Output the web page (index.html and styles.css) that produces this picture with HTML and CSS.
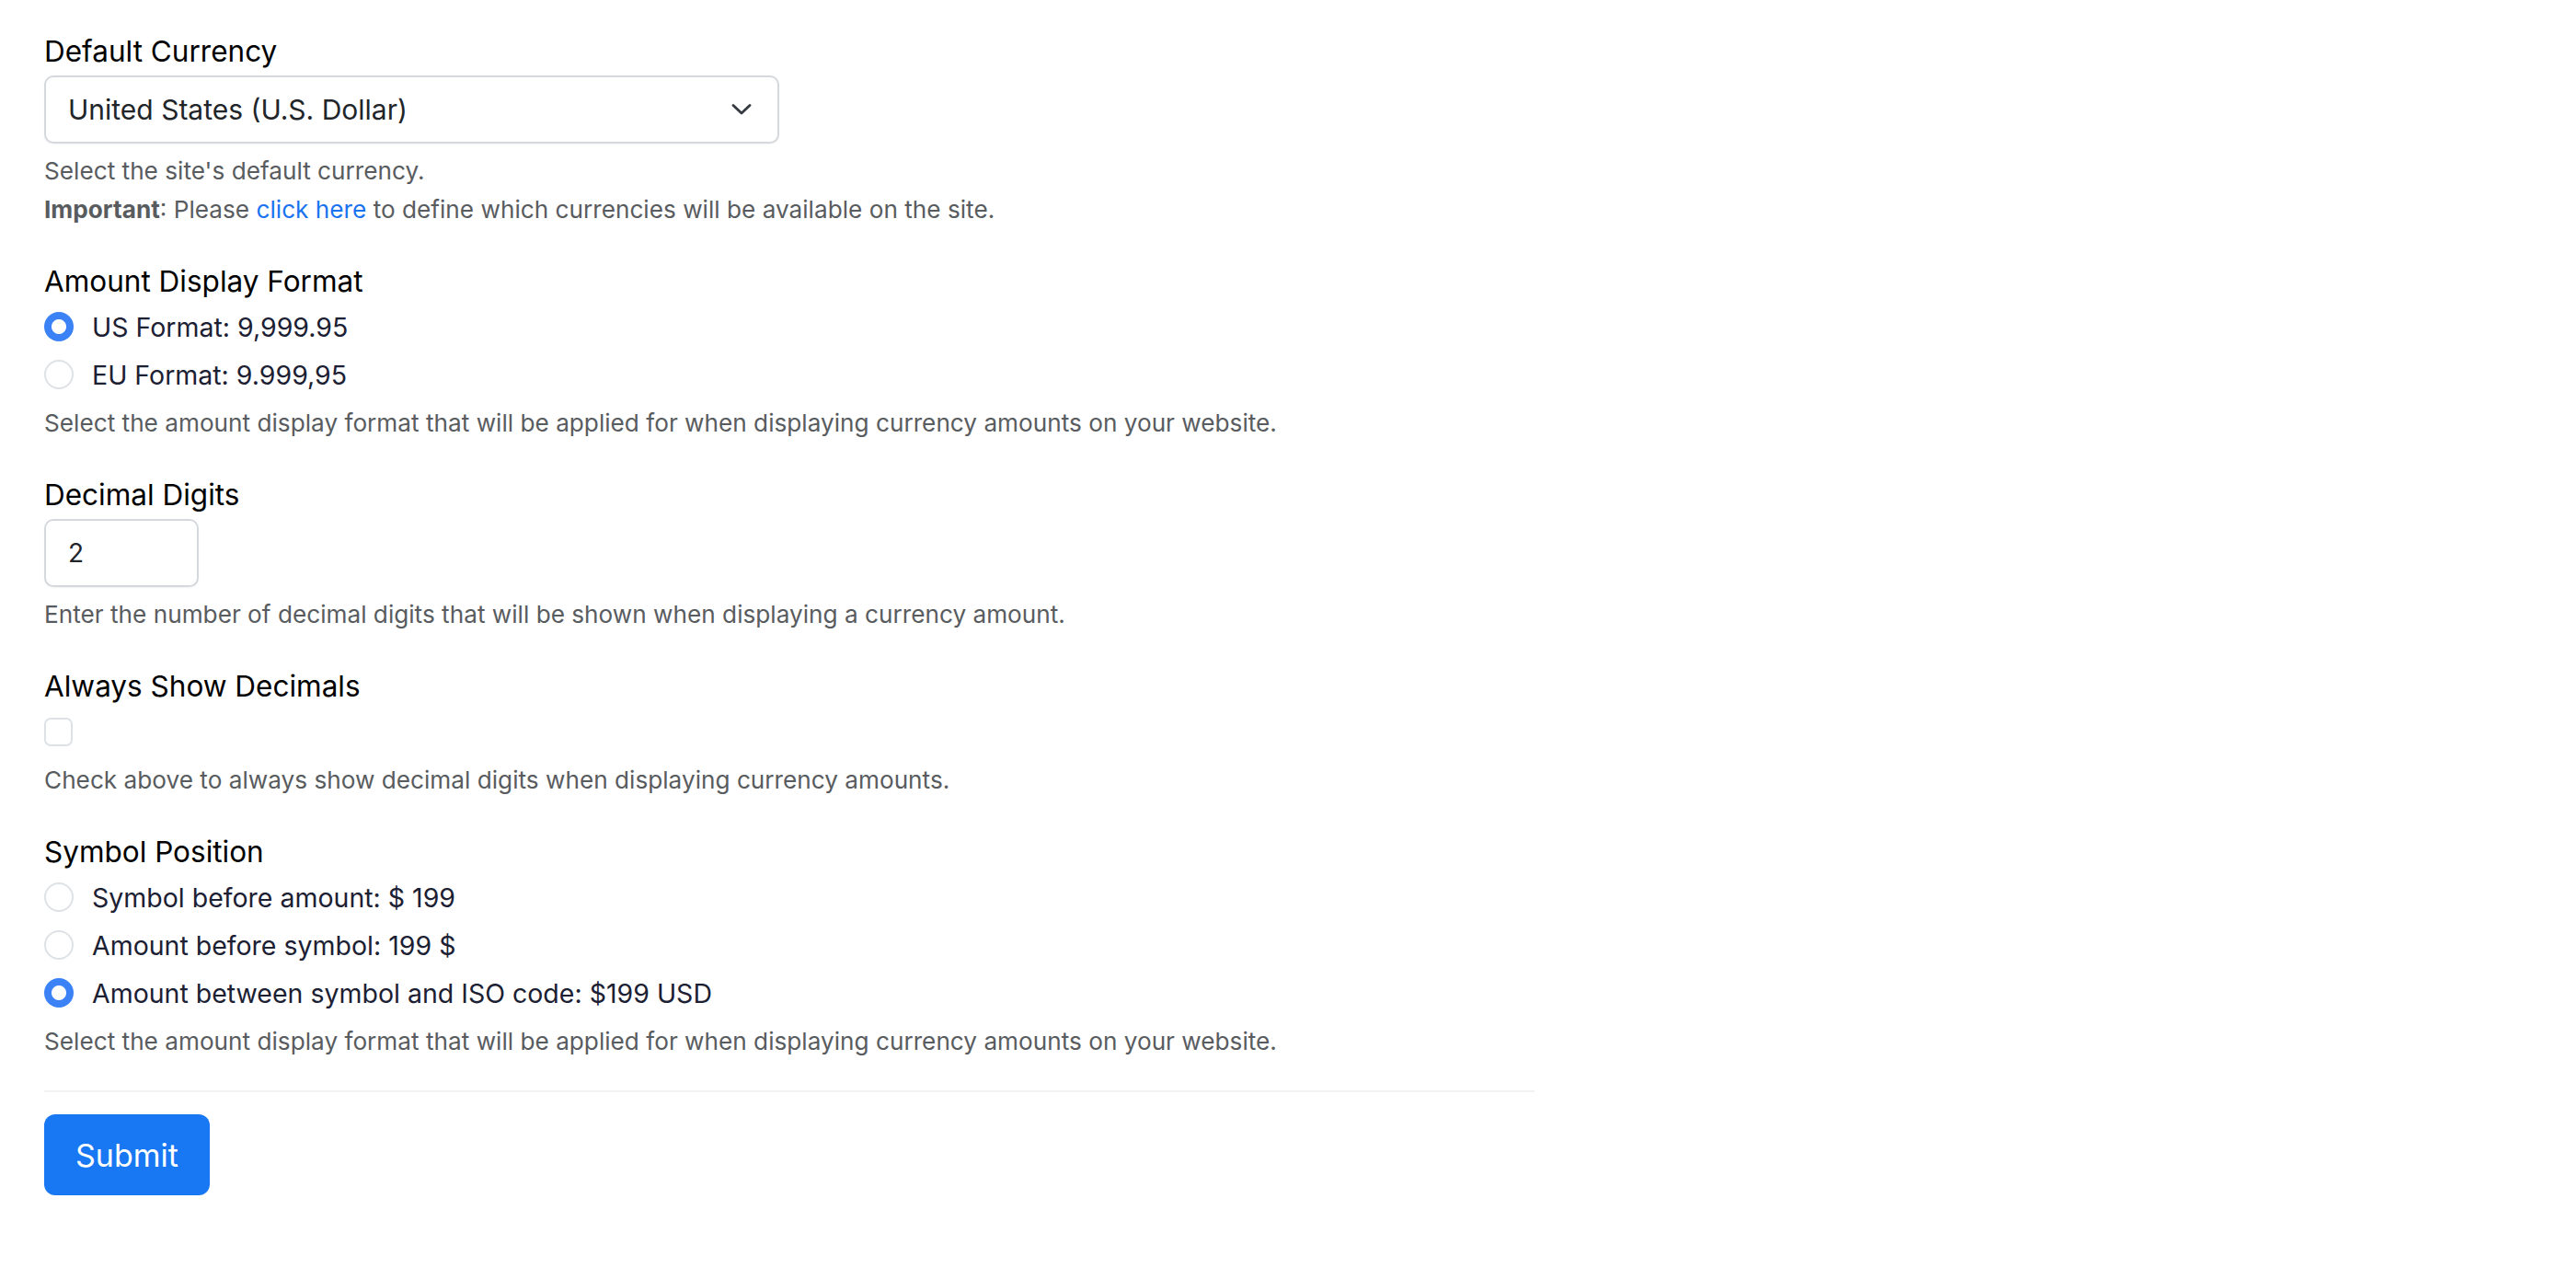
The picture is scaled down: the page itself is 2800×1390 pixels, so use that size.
FILE: index.html
```html
<!DOCTYPE html>
<html lang="en">
<head>
    <meta charset="UTF-8">
    <meta name="viewport" content="width=device-width, initial-scale=1.0">
    <title>Currency Settings</title>
    <link rel="stylesheet" href="styles.css">
</head>
<body>
    <form class="settings-form" onsubmit="return false;">

        <div class="field">
            <label class="field-label" for="currency">Default Currency</label>
            <div class="select-wrap">
                <select id="currency" class="form-select">
                    <option>United States (U.S. Dollar)</option>
                </select>
                <svg class="select-chevron" width="22" height="12" viewBox="0 0 22 12">
                    <path d="M2 1.5 L11 10 L20 1.5" fill="none" stroke="#343a40" stroke-width="2.8" stroke-linecap="round" stroke-linejoin="round"/>
                </svg>
            </div>
            <div class="form-text">
                <div>Select the site's default currency.</div>
                <div><strong>Important</strong>: Please <a href="#">click here</a> to define which currencies will be available on the site.</div>
            </div>
        </div>

        <div class="field">
            <span class="field-label">Amount Display Format</span>
            <div class="check-list">
                <label class="check"><input type="radio" name="format" checked> US Format: 9,999.95</label>
                <label class="check"><input type="radio" name="format"> EU Format: 9.999,95</label>
            </div>
            <div class="form-text">Select the amount display format that will be applied for when displaying currency amounts on your website.</div>
        </div>

        <div class="field">
            <label class="field-label" for="decimals">Decimal Digits</label>
            <input type="number" id="decimals" class="form-input" value="2">
            <div class="form-text">Enter the number of decimal digits that will be shown when displaying a currency amount.</div>
        </div>

        <div class="field">
            <span class="field-label">Always Show Decimals</span>
            <div class="check-list">
                <label class="check"><input type="checkbox" name="always_decimals"></label>
            </div>
            <div class="form-text">Check above to always show decimal digits when displaying currency amounts.</div>
        </div>

        <div class="field last">
            <span class="field-label">Symbol Position</span>
            <div class="check-list">
                <label class="check"><input type="radio" name="symbol"> Symbol before amount: $ 199</label>
                <label class="check"><input type="radio" name="symbol"> Amount before symbol: 199 $</label>
                <label class="check"><input type="radio" name="symbol" checked> Amount between symbol and ISO code: $199 USD</label>
            </div>
            <div class="form-text">Select the amount display format that will be applied for when displaying currency amounts on your website.</div>
        </div>

        <hr class="divider">

        <button type="submit" class="btn-primary">Submit</button>
    </form>
</body>
</html>
```

FILE: styles.css
```css
/* base */
body {
    margin: 0;
    padding: 36px 48px 0;
    font-family: Inter, "Noto Sans", sans-serif;
    color: #212529;
    background-color: #ffffff;
}
.settings-form {
    width: 1620px;
}
.field {
    margin-bottom: 37px;
}
.field.last {
    margin-bottom: 0;
}
.field.last .check-list {
    margin-top: 5px;
}
.field-label {
    display: block;
    font-size: 31.5px;
    line-height: 40px;
    color: #000;
    margin-bottom: 6px;
}

/* select box */
.select-wrap {
    position: relative;
    width: 799px;
}
.form-select {
    display: block;
    width: 100%;
    height: 74px;
    padding: 0 70px 0 24px;
    font-family: inherit;
    font-size: 30px;
    color: #212529;
    background-color: #fff;
    border: 2px solid #d5d8dc;
    border-radius: 10px;
    box-shadow: 0 1px 2px rgba(0, 0, 0, 0.05);
    appearance: none;
    -webkit-appearance: none;
}
.select-chevron {
    position: absolute;
    right: 30px;
    top: 31px;
    pointer-events: none;
}

/* number input */
.form-input {
    display: block;
    box-sizing: border-box;
    width: 168px;
    height: 74px;
    padding: 0 24px;
    font-family: inherit;
    font-size: 28px;
    color: #212529;
    border: 2px solid #d5d8dc;
    border-radius: 10px;
    box-shadow: 0 1px 2px rgba(0, 0, 0, 0.05);
    -moz-appearance: textfield;
}
.form-input::-webkit-inner-spin-button,
.form-input::-webkit-outer-spin-button {
    -webkit-appearance: none;
    margin: 0;
}

/* help text */
.form-text {
    margin-top: 9px;
    font-size: 26.2px;
    line-height: 42px;
    color: #595c5f;
}
.form-text strong {
    font-weight: 700;
}
.form-text a {
    color: #1a73f0;
    text-decoration: none;
}

/* radios and checkboxes */
.check-list {
    display: flex;
    flex-direction: column;
    gap: 6px;
}
.check {
    display: flex;
    align-items: center;
    gap: 20px;
    height: 46px;
    font-size: 28.5px;
    color: #1c2033;
}
.check input {
    appearance: none;
    -webkit-appearance: none;
    margin: 0;
    flex-shrink: 0;
    box-sizing: border-box;
    background-color: #fff;
    border: 2px solid #dee2e6;
}
.check input[type="radio"] {
    width: 32px;
    height: 32px;
    border-radius: 50%;
}
.check input[type="radio"]:checked {
    border: none;
    background: radial-gradient(circle, #fff 0 7.5px, #3b82f6 8.5px);
}
.check input[type="checkbox"] {
    width: 31px;
    height: 31px;
    border-radius: 7px;
}

/* footer */
.divider {
    margin: 32px 0 24px;
    border: 0;
    border-top: 2px solid #f1f2f3;
}
.btn-primary {
    height: 88px;
    padding: 0 34px;
    font-family: inherit;
    font-size: 34px;
    color: #fff;
    background-color: #1877f2;
    border: none;
    border-radius: 12px;
    cursor: pointer;
}
.btn-primary:hover {
    background-color: #1366d6;
}
```
